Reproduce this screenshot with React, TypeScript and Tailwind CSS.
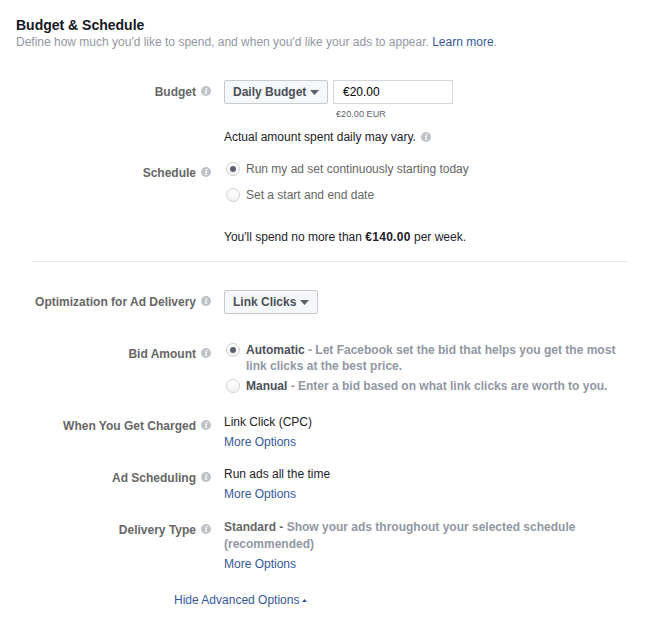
import type { ReactNode } from 'react'

function InfoIcon({ className = '' }: { className?: string }) {
  return (
    <svg viewBox="0 0 10 10" className={`h-[10px] w-[10px] shrink-0 ${className}`}>
      <circle cx="5" cy="5" r="5" fill="#bec3c9" />
      <circle cx="5.6" cy="2.5" r="0.85" fill="#fff" />
      <path d="M4.1 4.3H5.4L4.8 7.5H6" fill="none" stroke="#fff" strokeWidth="1.1" />
    </svg>
  )
}

function Row({ label, className = '', children }: {
  label: string
  className?: string
  children: ReactNode
}) {
  return (
    <div className={`flex ${className}`}>
      <div className="flex w-[211px] shrink-0 items-start justify-end pt-1 font-bold text-[#666]">
        <span className="whitespace-nowrap">{label}</span>
        <InfoIcon className="ml-[5px] mt-[2px]" />
      </div>
      <div className="ml-[13px] min-w-0 flex-1">{children}</div>
    </div>
  )
}

function SelectButton({ label, className }: { label: string; className: string }) {
  return (
    <button className={`flex h-6 items-center justify-between rounded-[2px] border border-[#c8cad0] bg-[#f6f7f9] px-2 font-bold text-[#4b4f56] ${className}`}>
      <span className="whitespace-nowrap">{label}</span>
      <svg viewBox="0 0 9 5" className="h-[5px] w-[9px] shrink-0">
        <path d="M0 0H9L4.5 5Z" fill="#5b606b" />
      </svg>
    </button>
  )
}

function Radio({ checked = false }: { checked?: boolean }) {
  return (
    <span className="ml-[2px] mr-[6px] mt-[1px] flex h-[14px] w-[14px] shrink-0 items-center justify-center rounded-full border border-[#d0d0d0] bg-linear-to-b from-white to-[#f1f1f1]">
      {checked && <span className="h-[6px] w-[6px] rounded-full bg-[#5a6070]" />}
    </span>
  )
}

function MoreOptions({ className = 'mt-1' }: { className?: string }) {
  return <a className={`block text-[#365899] ${className}`}>More Options</a>
}

export default function App() {
  return (
    <div className="h-[618px] w-[659px] overflow-hidden bg-white pt-4 font-['Liberation_Sans',Arial,sans-serif] text-[12px] leading-4 text-[#1d2129]">
      <header className="pl-4">
        <h1 className="text-[14px] font-bold leading-[18px] text-[#141823]">Budget &amp; Schedule</h1>
        <p className="text-[#9197a3]">
          Define how much you'd like to spend, and when you'd like your ads to appear.{' '}
          <a className="text-[#365899]">Learn more</a>.
        </p>
      </header>

      <Row label="Budget" className="mt-[30px]">
        <div className="flex">
          <SelectButton label="Daily Budget" className="w-[104px]" />
          <div className="ml-[5px]">
            <div className="flex h-6 w-[120px] items-center border border-[#d3d6db] pl-[9px] text-black">€20.00</div>
            <div className="ml-[3px] mt-1 text-[9px] leading-3 tracking-[0.08px] text-[#5c606b]">€20.00 EUR</div>
          </div>
        </div>
        <div className="mt-[9px] flex items-start">
          <span>Actual amount spent daily may vary.</span>
          <InfoIcon className="ml-[5px] mt-[3px]" />
        </div>
      </Row>

      <Row label="Schedule" className="mt-4">
        <div className="flex text-[#666]">
          <Radio checked />
          <span>Run my ad set continuously starting today</span>
        </div>
        <div className="mt-[10px] flex text-[#666]">
          <Radio />
          <span>Set a start and end date</span>
        </div>
        <p className="mt-[26px]">
          You'll spend no more than <b className="tracking-[0.28px]">€140.00</b> per week.
        </p>
      </Row>

      <hr className="mx-8 mt-4 border-[#e5e5e5]" />

      <Row label="Optimization for Ad Delivery" className="mt-7">
        <SelectButton label="Link Clicks" className="w-[94px]" />
      </Row>

      <Row label="Bid Amount" className="mt-7">
        <div className="flex font-bold text-[#9197a3]">
          <Radio checked />
          <span>
            <span className="text-[#4b4f56]">Automatic</span> - Let Facebook set the bid that helps you get the most
            <br />
            link clicks at the best price.
          </span>
        </div>
        <div className="mt-1 flex font-bold text-[#9197a3]">
          <Radio />
          <span>
            <span className="text-[#4b4f56]">Manual</span> - Enter a bid based on what link clicks are worth to you.
          </span>
        </div>
      </Row>

      <Row label="When You Get Charged" className="mt-5">
        <p>Link Click (CPC)</p>
        <MoreOptions />
      </Row>

      <Row label="Ad Scheduling" className="mt-4">
        <p>Run ads all the time</p>
        <MoreOptions />
      </Row>

      <Row label="Delivery Type" className="mt-4">
        <p className="pt-[1px] font-bold leading-[17px] text-[#9197a3]">
          <span className="text-[#666]">Standard -</span> Show your ads throughout your selected schedule
          <br />
          (recommended)
        </p>
        <MoreOptions className="mt-[3px]" />
      </Row>

      <a className="ml-[174px] mt-5 flex items-center text-[#365899]">
        Hide Advanced Options
        <svg viewBox="0 0 5 3" className="ml-[3px] mt-px h-[3px] w-[5px]">
          <path d="M0 3L2.5 0L5 3Z" fill="#365899" />
        </svg>
      </a>
    </div>
  )
}
